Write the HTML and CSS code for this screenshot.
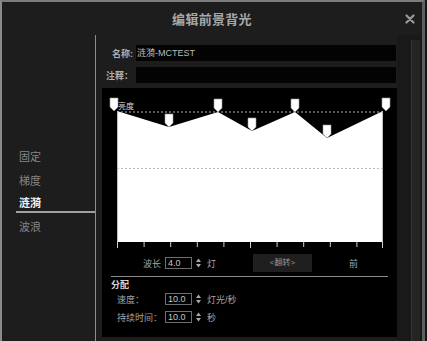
FILE: index.html
```html
<!DOCTYPE html>
<html lang="zh-CN">
<head>
<meta charset="utf-8">
<title>编辑前景背光</title>
<link rel="stylesheet" href="styles.css">
</head>
<body>
<div class="window">
  <header class="titlebar">
    <div></div>
    <h1 class="title">编辑前景背光</h1>
    <div class="close">
      <svg width="10" height="10" viewBox="0 0 10 10"><path d="M1.5 1.5 L8.5 8.5 M8.5 1.5 L1.5 8.5" stroke="#9a9a9a" stroke-width="2.2" stroke-linecap="round"/></svg>
    </div>
  </header>
  <div class="main">
    <nav class="sidebar">
      <div class="nav">
        <div class="nav-item">固定</div>
        <div class="nav-item">梯度</div>
        <div class="nav-item active">涟漪</div>
        <div class="nav-item">波浪</div>
      </div>
    </nav>
    <section class="content">
      <div class="form">
        <div class="field">
          <label class="field-label">名称:</label>
          <div class="field-input">涟漪-MCTEST</div>
        </div>
        <div class="field">
          <label class="field-label">注释：</label>
          <div class="field-input"></div>
        </div>
        <div class="panel">
          <svg class="chart" width="295" height="166" viewBox="0 0 295 166">
            <polygon points="15,23 67,39 116,24 150,43 193,24 225,50 281,23 281,154 15,154" fill="#ffffff"/>
            <line x1="15" y1="24" x2="281" y2="24" stroke="#b5b5b5" stroke-width="1" stroke-dasharray="2 2"/>
            <line x1="15" y1="80.5" x2="281" y2="80.5" stroke="#b8b8b8" stroke-width="1" stroke-dasharray="2 2"/>
            <line x1="15.5" y1="23" x2="15.5" y2="154" stroke="#bdbdbd" stroke-width="1"/>
            <line x1="280.5" y1="23" x2="280.5" y2="154" stroke="#bdbdbd" stroke-width="1"/>
            <g stroke="#d0d0d0" stroke-width="1">
              <line x1="15.5" y1="154" x2="15.5" y2="160"/>
              <line x1="42.1" y1="154" x2="42.1" y2="159"/>
              <line x1="68.7" y1="154" x2="68.7" y2="159"/>
              <line x1="95.3" y1="154" x2="95.3" y2="159"/>
              <line x1="121.9" y1="154" x2="121.9" y2="159"/>
              <line x1="148.5" y1="154" x2="148.5" y2="160"/>
              <line x1="175.1" y1="154" x2="175.1" y2="159"/>
              <line x1="201.7" y1="154" x2="201.7" y2="159"/>
              <line x1="228.3" y1="154" x2="228.3" y2="159"/>
              <line x1="254.9" y1="154" x2="254.9" y2="159"/>
              <line x1="280.5" y1="154" x2="280.5" y2="160"/>
            </g>
            <text x="16" y="21" class="chart-label">亮度</text>
            <g fill="#ffffff" stroke="#9a9a9a" stroke-width="0.6">
              <path transform="translate(12 10)" d="M-4 0 H4 V9 L0 13 L-4 9 Z"/>
              <path transform="translate(67 26)" d="M-4 0 H4 V9 L0 13 L-4 9 Z"/>
              <path transform="translate(116 11)" d="M-4 0 H4 V9 L0 13 L-4 9 Z"/>
              <path transform="translate(150 30)" d="M-4 0 H4 V9 L0 13 L-4 9 Z"/>
              <path transform="translate(193 11)" d="M-4 0 H4 V9 L0 13 L-4 9 Z"/>
              <path transform="translate(225 37)" d="M-4 0 H4 V9 L0 13 L-4 9 Z"/>
              <path transform="translate(284 10)" d="M-4 0 H4 V9 L0 13 L-4 9 Z"/>
            </g>
          </svg>
          <div class="controls">
            <span class="ctl-label">波长</span>
            <span class="num-box">4.0</span>
            <svg class="spin" width="5" height="10" viewBox="0 0 5 10"><path d="M0 4 L2.5 0.5 L5 4 Z M0 6 L2.5 9.5 L5 6 Z" fill="#aaaaaa"/></svg>
            <span class="unit">灯</span>
            <span class="btn">&lt;翻转&gt;</span>
            <span class="front">前</span>
          </div>
          <div class="divider"></div>
          <div class="section-title">分配</div>
          <div class="param">
            <span class="param-label">速度：</span>
            <span class="num-box">10.0</span>
            <svg class="spin" width="5" height="10" viewBox="0 0 5 10"><path d="M0 4 L2.5 0.5 L5 4 Z M0 6 L2.5 9.5 L5 6 Z" fill="#aaaaaa"/></svg>
            <span class="param-unit">灯光/秒</span>
          </div>
          <div class="param">
            <span class="param-label">持续时间：</span>
            <span class="num-box">10.0</span>
            <svg class="spin" width="5" height="10" viewBox="0 0 5 10"><path d="M0 4 L2.5 0.5 L5 4 Z M0 6 L2.5 9.5 L5 6 Z" fill="#aaaaaa"/></svg>
            <span class="param-unit">秒</span>
          </div>
        </div>
      </div>
      <div class="gutter">
        <div class="track"></div>
      </div>
    </section>
  </div>
</div>
</body>
</html>
```
FILE: styles.css
```css
* { box-sizing: border-box; }

html, body {
  margin: 0;
  padding: 0;
  background: #161616;
}

body {
  font-family: "Liberation Sans", "Noto Sans CJK SC", sans-serif;
  width: 427px;
  height: 341px;
  overflow: hidden;
}

.window {
  width: 425px;
  height: 341px;
  background: #1d1d1d;
  border-top: 2px solid #7c7c7c;
  border-left: 2px solid #8a8a8a;
  border-right: 3px solid #5e5e5e;
  display: flex;
  flex-direction: column;
}

.titlebar {
  height: 33px;
  flex: none;
  display: grid;
  grid-template-columns: 1fr auto 1fr;
  align-items: center;
}

.title {
  margin: 0;
  font-size: 13px;
  font-weight: bold;
  color: #a8a8a8;
  letter-spacing: 0.3px;
}

.close {
  justify-self: end;
  padding-right: 7px;
  display: flex;
  align-items: center;
}

.main {
  flex: 1;
  display: flex;
  min-height: 0;
}

.sidebar {
  width: 94px;
  flex: none;
  border-right: 1px solid #8e8e8e;
  padding-top: 110px;
}

.nav {
  margin-left: 14px;
}

.nav-item {
  padding: 4px 0 4px 3px;
  line-height: 16px;
  font-size: 11px;
  color: #858585;
}

.nav-item.active {
  padding: 2px 0 0 3px;
  color: #f2f2f2;
  font-weight: bold;
  border-bottom: 2px solid #a0a0a0;
}

.nav-item.active + .nav-item {
  padding-top: 6px;
}

.content {
  flex: 1;
  display: flex;
  min-width: 0;
}

.form {
  width: 301px;
  flex: none;
  padding: 10px 0 4px 6px;
  display: flex;
  flex-direction: column;
}

.field {
  display: grid;
  grid-template-columns: 31px 1fr;
  column-gap: 3px;
  align-items: center;
  height: 16px;
  margin-bottom: 6px;
}

.field + .field {
  margin-bottom: 5px;
}

.field-label {
  text-align: right;
  font-size: 9px;
  font-weight: bold;
  color: #b0b0b0;
  white-space: nowrap;
}

.field-input {
  height: 16px;
  background: #030303;
  font-size: 9px;
  line-height: 16px;
  color: #bcbcbc;
  padding-left: 1px;
  margin-right: 1px;
}

.panel {
  flex: 1;
  background: #000000;
  display: flex;
  flex-direction: column;
}

.chart {
  display: block;
  flex: none;
}

.chart-label {
  font-family: "Noto Sans CJK SC", sans-serif;
  font-size: 8px;
  fill: #d8d8d8;
}

.controls {
  height: 18px;
  display: flex;
  align-items: center;
  padding-left: 41px;
  font-size: 9px;
  color: #a5a5a5;
}

.ctl-label {
  width: 22px;
}

.num-box {
  width: 27px;
  height: 12px;
  border: 1px solid #6e6e6e;
  font-size: 9px;
  line-height: 10px;
  color: #c4c4c4;
  padding-left: 2px;
}

.spin {
  margin-left: 4px;
  flex: none;
}

.unit {
  margin-left: 6px;
  width: 46px;
}

.btn {
  width: 59px;
  height: 18px;
  background: #1f1f1f;
  color: #959595;
  font-size: 8px;
  line-height: 18px;
  text-align: center;
}

.front {
  margin-left: 37px;
}

.divider {
  height: 1px;
  background: #8a8a8a;
  margin: 4px 9px 0;
}

.section-title {
  padding-left: 9px;
  margin-top: 2px;
  height: 12px;
  line-height: 12px;
  font-size: 9px;
  font-weight: bold;
  color: #d8d8d8;
}

.param {
  display: flex;
  align-items: center;
  height: 12px;
  margin-top: 2px;
  padding-left: 15px;
  font-size: 9px;
  color: #a5a5a5;
}

.param + .param {
  margin-top: 6px;
}

.param-label {
  width: 48px;
  white-space: nowrap;
}

.param-unit {
  margin-left: 6px;
}

.gutter {
  flex: 1;
  padding: 5px 2px 0 14px;
  background: #191919;
}

.track {
  height: 100%;
  background: #242424;
  border-left: 1px solid #333333;
}
```
